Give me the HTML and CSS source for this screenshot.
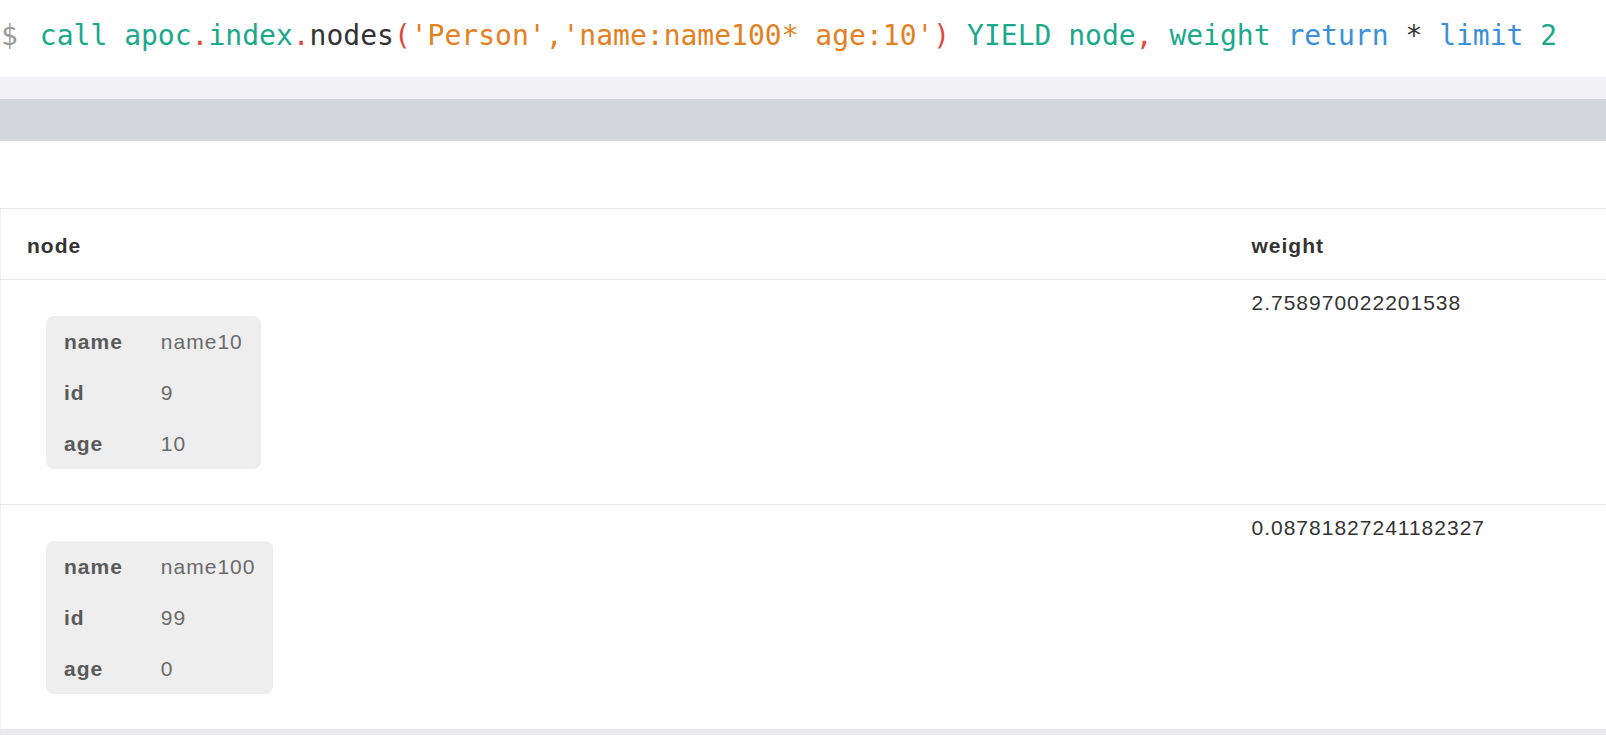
FILE: index.html
```html
<!DOCTYPE html>
<html>
<head>
<meta charset="utf-8">
<title>apoc.index.nodes</title>
<link rel="stylesheet" href="styles.css">
</head>
<body>
<div class="frame">
  <div class="query"><span class="prompt">$</span><code class="code"><span class="kw">call</span> <span class="kw">apoc</span><span class="pun">.</span><span class="kw">index</span><span class="pun">.</span><span class="fn">nodes</span><span class="pun">(</span><span class="str">'Person'</span><span class="str">,</span><span class="str">'name:name100* age:10'</span><span class="pun">)</span> <span class="kw">YIELD</span> <span class="kw">node</span><span class="pun">,</span> <span class="kw">weight</span> <span class="kw2">return</span> <span class="op">*</span> <span class="kw2">limit</span> <span class="kw">2</span></code></div>
  <div class="band-light"></div>
  <div class="band-dark"></div>
  <div class="result">
    <table class="grid">
      <colgroup><col class="col-node"><col class="col-weight"></colgroup>
      <thead>
        <tr><th>node</th><th>weight</th></tr>
      </thead>
      <tbody>
        <tr>
          <td>
            <table class="props">
              <tr><td class="k">name</td><td class="v">name10</td></tr>
              <tr><td class="k">id</td><td class="v">9</td></tr>
              <tr><td class="k">age</td><td class="v">10</td></tr>
            </table>
          </td>
          <td class="num">2.758970022201538</td>
        </tr>
        <tr>
          <td>
            <table class="props">
              <tr><td class="k">name</td><td class="v">name100</td></tr>
              <tr><td class="k">id</td><td class="v">99</td></tr>
              <tr><td class="k">age</td><td class="v">0</td></tr>
            </table>
          </td>
          <td class="num">0.08781827241182327</td>
        </tr>
      </tbody>
    </table>
  </div>
  <div class="footer"></div>
</div>
</body>
</html>
```

FILE: styles.css
```css
* { box-sizing: border-box; }

html, body {
  margin: 0;
  padding: 0;
  background: #ffffff;
}

body {
  width: 1606px;
  height: 735px;
  overflow: hidden;
  font-family: "Liberation Sans", Arial, sans-serif;
}

.query {
  height: 77px;
  padding: 20px 0 25px 1px;
  font-family: "DejaVu Sans Mono", monospace;
  font-size: 28px;
  line-height: 32px;
  white-space: pre;
  color: #333333;
}

.prompt {
  color: #9b9b9b;
  margin-right: 22px;
}

.code { font-family: inherit; }
.kw { color: #1aa98b; }
.kw2 { color: #3a90d9; }
.pun { color: #e0493c; }
.str { color: #e5801f; }
.fn { color: #333333; }
.op { color: #333333; }

.band-light {
  height: 22px;
  background: #f0f0f4;
}

.band-dark {
  height: 42px;
  background: #d2d5da;
}

.result {
  margin-top: 67px;
}

.grid {
  width: 100%;
  border-collapse: collapse;
  table-layout: fixed;
  font-size: 21px;
  letter-spacing: 1px;
  line-height: 24px;
  color: #333333;
}

.col-node { width: 1225px; }

.grid th {
  text-align: left;
  font-weight: bold;
  padding: 25px 26px 21px;
  border-top: 1px solid #e8e8ed;
  border-bottom: 1px solid #e8e8ed;
}

.grid > tbody > tr > td {
  vertical-align: top;
  padding: 11px 26px;
  border-bottom: 1px solid #e8e8ed;
}

.grid th:first-child,
.grid > tbody > tr > td:first-child {
  border-left: 1px solid #f2f2f4;
}

.props {
  margin: 25px 0 24px 19px;
  background: #eeeeee;
  border-radius: 8px;
  border-collapse: separate;
  border-spacing: 0;
}

.props .k {
  font-weight: bold;
  color: #5a5a5a;
  padding: 14px 38px 13px 18px;
}

.props .v {
  color: #6a6a6a;
  padding: 14px 18px 13px 0;
}

.footer {
  height: 10px;
  background: #ebebef;
}
```
